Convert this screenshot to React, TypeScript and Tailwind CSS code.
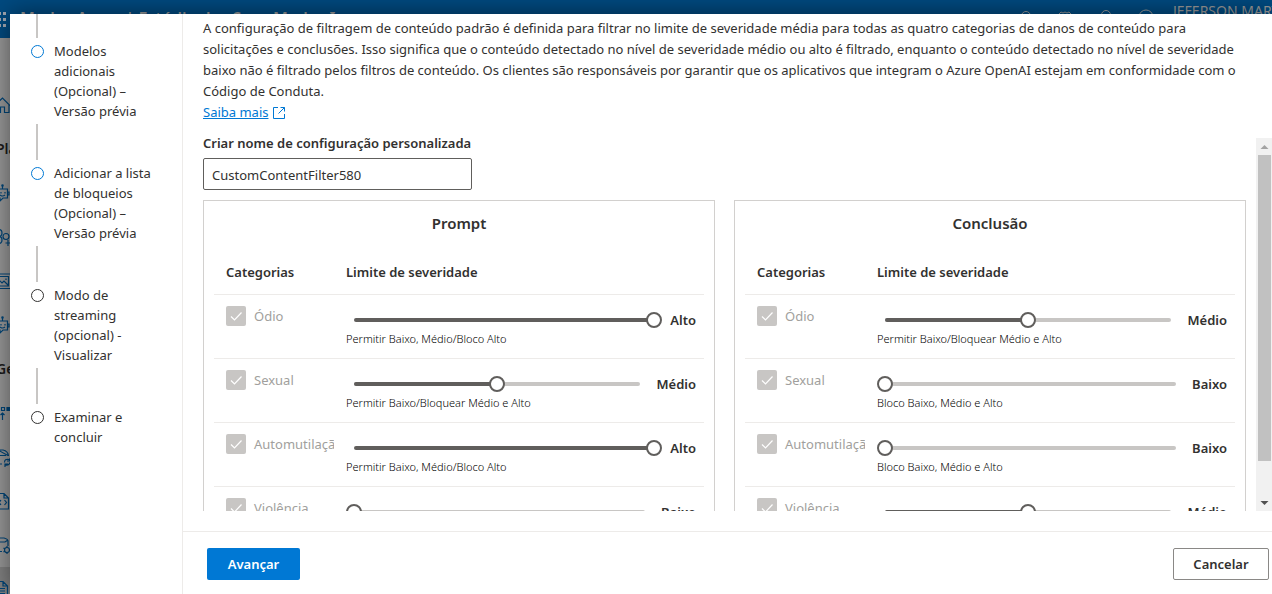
import { useState, type ReactNode } from "react";

type Level = 0 | 1 | 2;

const LEVELS = ["Baixo", "Médio", "Alto"];
const CAPTIONS = [
  "Bloco Baixo, Médio e Alto",
  "Permitir Baixo/Bloquear Médio e Alto",
  "Permitir Baixo, Médio/Bloco Alto",
];
const CATEGORIES = ["Ódio", "Sexual", "Automutilação", "Violência"];

const STEPS = [
  { title: "Modelos adicionais (Opcional) – Versão prévia", active: true },
  { title: "Adicionar a lista de bloqueios (Opcional) – Versão prévia", active: true },
  { title: "Modo de streaming (opcional) - Visualizar", active: false },
  { title: "Examinar e concluir", active: false },
];

function Glyph({ children }: { children: ReactNode }) {
  return (
    <svg
      viewBox="0 0 20 20"
      className="size-5 shrink-0 fill-none stroke-[#004578]"
      strokeWidth="1.2"
      aria-hidden="true"
    >
      {children}
    </svg>
  );
}

const BOT = (
  <Glyph>
    <path d="M4 6h13.500v9h-4.500l-3 3v-3H4zM12.500 6V3M17.500 9h1.500v3h-1.500M11 9v1.500M15 9v1.500M10 12q2.500 2 5 0" />
    <circle cx="12.500" cy="2.500" r=".7" />
  </Glyph>
);

const RAIL: ReactNode[] = [
  <Glyph>
    <path d="M4 11l8.500-8 7.500 7.500M6 9.500v8h4.500v-5.500h4v5.500h4.500V9.500" />
  </Glyph>,
  <span className="pl-1.5 text-sm font-semibold text-[#1b1a19]">Pla</span>,
  BOT,
  <Glyph>
    <circle cx="8.500" cy="6" r="3.500" />
    <circle cx="16" cy="9.500" r="3" />
    <circle cx="8.500" cy="13" r="3.500" />
    <path d="M18 13v6M15.500 16h5" />
  </Glyph>,
  <Glyph>
    <path d="M0 3h20M0 17.500h20M2 5.500h16.500v9.500H2M8 8l4 4 2-2 4 4M16 7.500v1.500" />
  </Glyph>,
  BOT,
  <span className="pl-1.5 text-sm font-semibold text-[#1b1a19]">Ge</span>,
  <Glyph>
    <path d="M11.500 4.500h3v3h-3zM12.500 17v-7M10.500 12l2-2 2 2" />
    <path d="M17 4.500h3v3h-3z" className="fill-[#004578]" />
  </Glyph>,
  <Glyph>
    <path d="M6 3h7q5 1 5.500 6M8 3q7 4 10 5.500M6 8.500h10M8 17h4M14.500 15.500q0-4 4.500-3l1 1M20 11v3h-3M20 15.500q-1 3.500-4.500 2.500M15 20v-3h3" />
  </Glyph>,
  <Glyph>
    <path d="M3 2.500h11l4.500 4.500v11H3M14 2.500v4.500h4.500M11 9l-2 2.500 2 2.500M14.500 9l2 2.500-2 2.500" />
  </Glyph>,
  <Glyph>
    <path d="M5 3h9q4 1 4 3v5M7 7h8l3-2M8 16.500h4" />
    <circle cx="17" cy="15" r="2.500" />
    <path d="M17 11v2M17 17v2M13.500 13l1.500 1M13.500 17l1.500-1M19 15h2" />
  </Glyph>,
  <Glyph>
    <path d="M6 2.500h7l4.500 4.500v9M13 2.500V7h4.500M7 7h3M7 9.500h8M7 12h8M7 14.500h8M14 18h6" />
  </Glyph>,
];

function Backdrop() {
  return (
    <div className="flex h-full flex-col overflow-hidden bg-[#999]">
      <header className="flex h-[38px] shrink-0 items-start justify-between bg-[#004a80] text-[#9a9a9a]">
        <div className="flex items-start gap-3 pt-2">
          <svg viewBox="0 0 8 20" className="h-5 w-2 fill-[#a3a9b3]" aria-hidden="true">
            <path d="M3 4h3v3H3zM3 10h3v3H3zM3 16h3v3H3zM0 4h1v3H0zM0 10h1v3H0zM0 16h1v3H0z" />
          </svg>
          <span className="text-base leading-5 font-semibold whitespace-nowrap">
            Modos Azure | Estúdio dos Seus Modos I
          </span>
        </div>
        <div className="flex shrink-0 items-start gap-5">
          <svg viewBox="0 0 132 20" className="h-5 w-[132px] fill-none stroke-[#9a9a9a]" aria-hidden="true">
            <circle cx="5" cy="16" r="4.500" />
            <path d="M38 14l2-2 2 1 2-1 2 1 2-1 2 2" />
            <circle cx="85" cy="15" r="4.500" />
            <circle cx="125" cy="17" r="7" />
          </svg>
          <span className="w-[99px] text-sm leading-[22px] whitespace-nowrap">JEFERSON MART</span>
        </div>
      </header>
      <aside className="flex flex-col pt-[45px]">
        {RAIL.map((item, i) => (
          <div
            key={i}
            className={
              i === RAIL.length - 1
                ? "-ml-2.5 flex h-11 w-12 shrink-0 items-center bg-[#828282]"
                : "-ml-2.5 flex h-11 w-12 shrink-0 items-center"
            }
          >
            {item}
          </div>
        ))}
      </aside>
    </div>
  );
}

function SeveritySlider({ name, initial }: { name: string; initial: Level }) {
  const [level, setLevel] = useState<number>(initial);
  return (
    <div className="flex flex-col">
      <div className="flex h-5 items-center gap-2">
        <div className="grid min-w-0 flex-1 items-center">
          <div className="mx-2 h-1 overflow-hidden rounded-sm bg-[#c8c6c4] [grid-area:1/1]">
            <div className="h-full bg-[#605e5c]" style={{ width: `${level * 50}%` }} />
          </div>
          <input
            type="range"
            min={0}
            max={2}
            value={level}
            aria-label={name}
            onChange={(e) => setLevel(Number(e.target.value))}
            className="h-4 w-full min-w-0 appearance-none bg-transparent [grid-area:1/1] [&::-webkit-slider-thumb]:size-4 [&::-webkit-slider-thumb]:appearance-none [&::-webkit-slider-thumb]:rounded-full [&::-webkit-slider-thumb]:border-2 [&::-webkit-slider-thumb]:border-solid [&::-webkit-slider-thumb]:border-[#605e5c] [&::-webkit-slider-thumb]:bg-white"
          />
        </div>
        <span className="text-[13px] leading-5 font-semibold text-[#323130]">{LEVELS[level]}</span>
      </div>
      <span className="text-[11px] leading-[18px] font-light text-black">{CAPTIONS[level]}</span>
    </div>
  );
}

function FilterPanel({ title, levels }: { title: string; levels: Level[] }) {
  return (
    <section className="border border-[#d2d0ce] px-2.5 pb-4">
      <h2 className="pt-3 text-center text-[15px] leading-5 font-semibold">{title}</h2>
      <table className="mt-[17px] w-full table-fixed border-collapse text-left">
        <thead>
          <tr className="h-11 border-b border-[#edebe9]">
            <th className="w-[120px] pl-3 font-semibold">Categorias</th>
            <th className="pl-3 font-semibold">Limite de severidade</th>
          </tr>
        </thead>
        <tbody>
          {CATEGORIES.map((category, i) => (
            <tr key={category} className="h-16 border-b border-[#edebe9] align-top">
              <td className="overflow-hidden pt-[11px] pl-3">
                <label className="flex items-center gap-2 whitespace-nowrap text-[#a19f9d]">
                  <span className="grid shrink-0">
                    <input
                      type="checkbox"
                      defaultChecked
                      disabled
                      className="size-5 appearance-none rounded-xs bg-[#c8c6c4] [grid-area:1/1]"
                    />
                    <svg
                      viewBox="0 0 20 20"
                      className="pointer-events-none size-5 fill-none stroke-white [grid-area:1/1]"
                      strokeWidth="1.2"
                      aria-hidden="true"
                    >
                      <path d="M5 10.500l3.500 3.500L15.500 6.500" />
                    </svg>
                  </span>
                  {category}
                </label>
              </td>
              <td className="pt-[15px] pr-2 pl-3">
                <SeveritySlider name={`${title}: ${category}`} initial={levels[i]} />
              </td>
            </tr>
          ))}
        </tbody>
      </table>
    </section>
  );
}

function Scrollbar() {
  return (
    <div className="mt-[5px] flex w-4 shrink-0 flex-col bg-[#f1f1f1]" aria-hidden="true">
      <svg viewBox="0 0 16 16" className="size-4 shrink-0 fill-[#a3a3a3]">
        <path d="M4.500 11h8L8.500 7z" />
      </svg>
      <div className="mt-px mr-px ml-0.5 h-[82%] bg-[#c1c1c1]" />
      <div className="flex-1" />
      <svg viewBox="0 0 16 16" className="size-4 shrink-0 fill-[#505050]">
        <path d="M4.500 6h8l-4 4z" />
      </svg>
    </div>
  );
}

export default function App() {
  const [name, setName] = useState("CustomContentFilter580");
  return (
    <div className="relative h-screen overflow-hidden font-['Noto_Sans','Open_Sans',sans-serif] text-[13px] leading-5 text-[#323130]">
      <Backdrop />
      <div
        role="dialog"
        aria-label="Criar configuração personalizada"
        className="absolute inset-0 top-3.5 left-2.5 flex bg-white shadow-[0_0_24px_rgba(0,0,0,0.5)]"
      >
        <nav className="w-[173px] shrink-0 border-r border-[#edebe9] pr-4 pl-5">
          <ol>
            {STEPS.map((step, i) => (
              <li key={step.title}>
                <div
                  className={
                    i === 0
                      ? "mb-[3px] ml-1.5 h-6 w-0.5 bg-[#c8c6c4]"
                      : "my-[3px] ml-1.5 h-9 w-0.5 bg-[#c8c6c4]"
                  }
                />
                <div className="flex items-start gap-2.5">
                  <span
                    className={
                      step.active
                        ? "mt-1 ml-px size-[13px] shrink-0 rounded-full border border-[#0078d4]"
                        : "mt-1 ml-px size-[13px] shrink-0 rounded-full border border-[#323130]"
                    }
                  />
                  <span>{step.title}</span>
                </div>
              </li>
            ))}
          </ol>
        </nav>
        <div className="flex min-w-0 flex-1 flex-col">
          <div className="pt-1 pr-5 pl-5 leading-[21px]">
            <p>
              A configuração de filtragem de conteúdo padrão é definida para filtrar no limite de severidade média
              para todas as quatro categorias de danos de conteúdo para solicitações e conclusões. Isso significa que
              o conteúdo detectado no nível de severidade médio ou alto é filtrado, enquanto o conteúdo detectado no
              nível de severidade baixo não é filtrado pelos filtros de conteúdo. Os clientes são responsáveis por
              garantir que os aplicativos que integram o Azure OpenAI estejam em conformidade com o Código de Conduta.
            </p>
            <a href="#saiba-mais" className="flex items-center gap-1 text-[#0078d4]">
              <span className="underline">Saiba mais</span>
              <svg viewBox="0 0 14 14" className="size-3.5 fill-none stroke-[#0078d4]" aria-hidden="true">
                <path d="M6 1.500H1.500v11h11V8M8.500 1.500h4V5.500M12.500 1.500L6.500 7.500" />
              </svg>
            </a>
          </div>
          <div className="mt-2.5 flex min-h-0 flex-1">
            <div className="min-w-0 flex-1 overflow-hidden pr-2.5 pl-5">
              <label htmlFor="config-name" className="block font-semibold">
                Criar nome de configuração personalizada
              </label>
              <input
                id="config-name"
                value={name}
                onChange={(e) => setName(e.target.value)}
                className="mt-[5px] block h-8 w-[269px] rounded-xs border border-[#605e5c] px-2 pt-0.5"
              />
              <div className="mt-2.5 grid grid-cols-2 gap-[19px]">
                <FilterPanel title="Prompt" levels={[2, 1, 2, 0]} />
                <FilterPanel title="Conclusão" levels={[1, 0, 0, 1]} />
              </div>
            </div>
            <Scrollbar />
          </div>
          <footer className="mt-5 flex shrink-0 justify-between border-t border-[#edebe9] pt-4 pr-[3px] pb-3.5 pl-6">
            <button type="button" className="h-8 w-[93px] rounded-xs bg-[#0078d4] font-semibold text-white">
              Avançar
            </button>
            <button type="button" className="h-8 w-24 rounded-xs border border-[#8a8886] bg-white font-semibold">
              Cancelar
            </button>
          </footer>
        </div>
      </div>
    </div>
  );
}
